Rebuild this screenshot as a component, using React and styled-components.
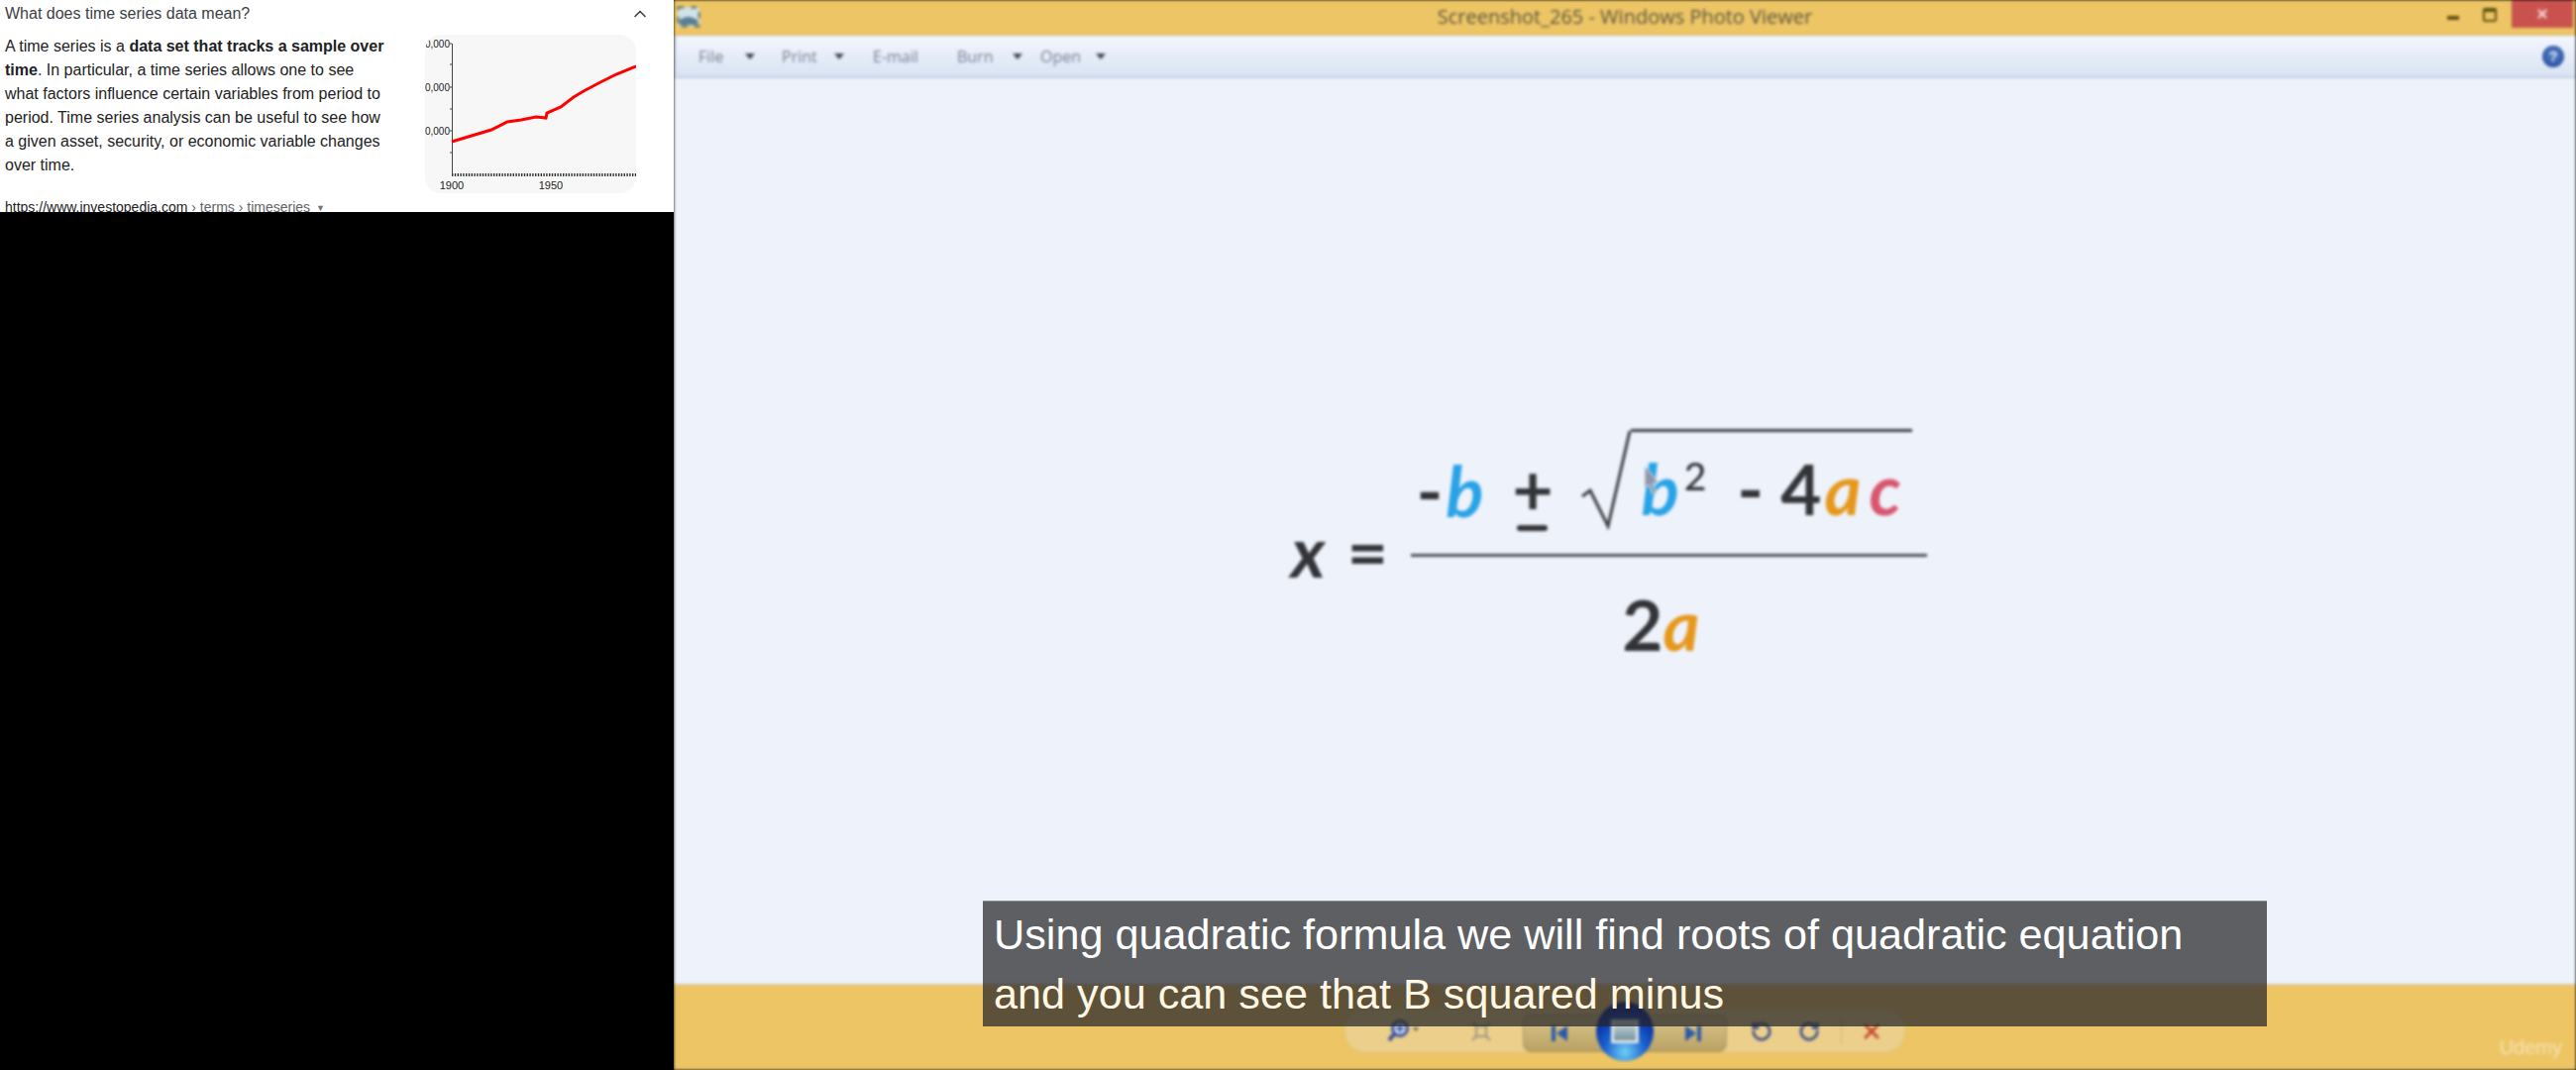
import React from 'react';
import styled, { createGlobalStyle } from 'styled-components';
import { ChevronUp, RotateCcw, RotateCw, X } from 'lucide-react';

const Global = createGlobalStyle`
  html, body { margin: 0; background: #000; }
  body { font-family: "Liberation Sans", Arial, sans-serif; }
`;

const Shell = styled.div`
  display: grid;
  grid-template-columns: 680px 1920px;
  width: 2600px;
  height: 1080px;
  overflow: hidden;
  background: #000;
`;

/* left: cropped search result */
const Snippet = styled.section`
  height: 214px;
  overflow: hidden;
  background: #fff;
  padding-left: 5px;
  color: #202124;
`;
const Question = styled.div`
  display: flex;
  align-items: center;
  justify-content: space-between;
  height: 27px;
  padding-right: 24px;
  font-size: 16px;
  color: #3c4043;
  svg { color: #444; }
`;
const Answer = styled.div`
  display: flex;
  justify-content: space-between;
  padding-right: 38px;
  margin-top: 8px;
`;
const AnswerText = styled.p`
  margin: 0;
  width: 388px;
  font-size: 16px;
  line-height: 24px;
  color: #222;
  b { font-weight: 700; color: #202124; }
`;
const ChartCard = styled.svg`
  display: block;
  width: 213px;
  height: 160px;
  border-radius: 16px;
  background: #f7f7f7;
`;
const Source = styled.div`
  margin-top: 4px;
  font-size: 14px;
  line-height: 20px;
  white-space: nowrap;
  color: #202124;
  span { color: #5f6368; }
  i { font-style: normal; font-size: 9px; color: #70757a; margin-left: 6px; vertical-align: 1px; }
`;

/* right: video of the photo viewer */
const Video = styled.section`
  position: relative;
  width: 1920px;
  height: 1080px;
  overflow: hidden;
`;
const Viewer = styled.div`
  display: flex;
  flex-direction: column;
  height: 1080px;
  background: #eef2fb;
  filter: blur(1.4px);
`;
const TitleBar = styled.header`
  position: relative;
  display: flex;
  align-items: center;
  justify-content: center;
  flex: 0 0 35px;
  background: #edc565;
  border-bottom: 1px solid #c9b27a;
`;
const WindowIcon = styled.svg`
  position: absolute;
  left: 2px;
  top: 5px;
`;
const WindowTitle = styled.div`
  font-family: "Open Sans", sans-serif;
  font-size: 20px;
  color: #5b5440;
  padding-bottom: 2px;
`;
const Controls = styled.div`
  position: absolute;
  right: 3px;
  top: 0;
  display: flex;
  align-items: flex-start;
`;
const Minimize = styled.div`
  width: 12px;
  height: 4px;
  margin: 16px 24px 0 0;
  background: #5f4c12;
`;
const Restore = styled.div`
  width: 10px;
  height: 8px;
  margin: 8px 15px 0 0;
  border: 2px solid #5f4c12;
  border-top-width: 4px;
  border-radius: 2px;
`;
const Close = styled.div`
  display: flex;
  align-items: center;
  justify-content: center;
  width: 62px;
  height: 28px;
  background: #c9524f;
  color: #fbd9d5;
`;
const MenuBar = styled.nav`
  display: flex;
  align-items: center;
  flex: 0 0 41px;
  padding-left: 22px;
  background: linear-gradient(#f4f6fd, #d8e3f2);
  border-bottom: 2px solid #c3cde0;
  border-left: 3px solid #d5dbe8;
`;
const MenuItem = styled.div`
  display: flex;
  align-items: center;
  width: ${p => p.$w}px;
  font-family: "Open Sans", sans-serif;
  font-size: 16px;
  color: #767f95;
`;
const Caret = styled.span`
  width: 0;
  height: 0;
  margin-left: ${p => p.$gap}px;
  border-left: 5px solid transparent;
  border-right: 5px solid transparent;
  border-top: 6px solid #3f4659;
`;
const HelpDot = styled.div`
  margin-left: auto;
  margin-right: 12px;
  width: 22px;
  height: 22px;
  border-radius: 50%;
  background: radial-gradient(circle at 50% 40%, #5a83c9, #1c3f91);
  color: #d7e3f6;
  font-size: 15px;
  font-weight: 700;
  line-height: 22px;
  text-align: center;
`;
const Canvas = styled.main`
  flex: 1;
  padding: 354px 0 0 623px;
`;
const Formula = styled.div`
  display: flex;
  align-items: center;
  color: #333438;
  font-family: Lato, sans-serif;
  font-weight: 700;
  font-size: 71px;
  line-height: 1;
`;
const Lhs = styled.span`
  font-style: italic;
  margin-right: 22px;
  padding-top: 12px;
`;
const Equals = styled.span`
  margin-right: 23px;
  padding-top: 12px;
`;
const Fraction = styled.div`
  display: flex;
  flex-direction: column;
  width: 521px;
`;
const Numerator = styled.div`
  display: flex;
  align-items: flex-start;
  height: 126px;
  border-bottom: 3px solid #4b4d52;
`;
const Term = styled.div`
  display: flex;
  align-items: baseline;
  padding-top: 26px;
  margin-left: ${p => p.$left || 0}px;
  letter-spacing: 3px;
`;
const Var = styled.span`
  font-style: italic;
  color: ${p => p.$c};
  margin-left: ${p => p.$left || 0}px;
`;
const Sup = styled.sup`
  font-size: 39px;
  font-weight: 500;
  line-height: 0;
  margin: 0 31px 0 5px;
  position: relative;
  top: -25px;
  vertical-align: 26px;
`;
const PlusMinus = styled.div`
  position: relative;
  width: 38px;
  margin: 0 0 0 26px;
  padding-top: 24px;
  text-align: center;
`;
const UnderBar = styled.div`
  position: absolute;
  left: 4px;
  top: 97px;
  width: 31px;
  height: 6px;
  border-radius: 3px;
  background: #333438;
`;
const RootSign = styled.svg`
  flex: none;
  margin-left: 31px;
`;
const Radicand = styled.div`
  position: relative;
  display: flex;
  align-items: baseline;
  align-self: flex-start;
  width: 284px;
  height: 100px;
  padding: 21px 0 0 11px;
  box-sizing: border-box;
  border-top: 3px solid #3a3b40;
`;
const Pointer = styled.svg`
  position: absolute;
  left: 13px;
  top: 33px;
`;
const Denominator = styled.div`
  display: flex;
  justify-content: center;
  padding: 32px 16px 0 0;
`;
const BottomBar = styled.footer`
  position: relative;
  display: flex;
  justify-content: center;
  flex: 0 0 87px;
  padding-top: 23px;
  box-sizing: border-box;
  background: #edc565;
  border-top: 2px solid #dcc795;
`;
const Pill = styled.div`
  display: flex;
  align-items: center;
  width: 568px;
  height: 45px;
  box-sizing: border-box;
  border: 1px solid #e0bf72;
  border-radius: 23px;
  background: #eccf8b;
`;
const Slot = styled.div`
  display: flex;
  align-items: center;
  justify-content: center;
  flex: 0 0 ${p => p.$w}px;
  color: ${p => p.$c || '#3c4f88'};
`;
const Segment = styled.div`
  position: relative;
  display: flex;
  align-items: center;
  justify-content: space-between;
  flex: 0 0 206px;
  height: 38px;
  margin-top: 5px;
  padding: 0 23px 0 26px;
  box-sizing: border-box;
  border: 1px solid #b09a60;
  border-radius: 8px;
  background: linear-gradient(#dcc58c, #b9a163);
`;
const Orb = styled.div`
  position: absolute;
  left: 50%;
  top: -14px;
  display: flex;
  align-items: center;
  justify-content: center;
  width: 58px;
  height: 60px;
  margin-left: -29px;
  border-radius: 50%;
  background: radial-gradient(circle at 50% 85%, #6fd0f5 0, #1a62cf 35%, #06269a 70%, #08206e 100%);
`;
const OrbScreen = styled.div`
  width: 22px;
  height: 18px;
  border: 3px solid #e3e6ea;
  background: linear-gradient(#c9d5dc, #74929a);
`;
const Separator = styled.div`
  width: 1px;
  height: 26px;
  background: #d3b571;
`;
const Watermark = styled.div`
  position: absolute;
  right: 14px;
  bottom: 11px;
  font-size: 20px;
  color: #f5e3b6;
`;

/* burned-in subtitle over the video */
const Caption = styled.div`
  position: absolute;
  left: 312px;
  top: 909px;
  width: 1296px;
  height: 127px;
  box-sizing: border-box;
  padding: 3px 0 0 11px;
  background: rgba(38, 38, 40, 0.72);
  border-top: 1px solid #8b8d93;
  font-size: 43.2px;
  line-height: 60px;
  white-space: nowrap;
`;
const CaptionLine = styled.div`
  color: ${p => p.$c};
`;

const linePoints = '27,108 47,102 67,96 83,88 97,86 112,83 122,84 123,79 137,73 150,63 160,57 177,48 193,40 213,32';

const Chart = () => (
  <ChartCard viewBox="0 0 213 160">
    <g fontFamily="Liberation Sans, Arial, sans-serif" fontSize="10" fill="#222">
      <text x="25" y="13" textAnchor="end">60,000</text>
      <text x="25" y="57" textAnchor="end">40,000</text>
      <text x="25" y="101" textAnchor="end">20,000</text>
      <text x="27" y="156" textAnchor="middle" fontSize="11">1900</text>
      <text x="127" y="156" textAnchor="middle" fontSize="11">1950</text>
    </g>
    <path d="M27.5 9V142M25 9h2M25 30h2M25 53h2M25 75h2M25 97h2M25 119h2" stroke="#444" fill="none" />
    <path d="M27 141.5H213" stroke="#333" strokeWidth="3" strokeDasharray="1.4 1.4" fill="none" />
    <polyline points={linePoints} fill="none" stroke="#f00" strokeWidth="3" />
  </ChartCard>
);

const Magnifier = () => (
  <svg width="34" height="28" viewBox="0 0 34 28">
    <circle cx="14" cy="11" r="7.5" fill="#cfe0f5" stroke="#3c4f9a" strokeWidth="3" />
    <path d="M10 11h8M14 7v8" stroke="#3c4f9a" strokeWidth="2" />
    <path d="M8 17l-5 6" stroke="#3c4f9a" strokeWidth="4" />
    <path d="M27 10h6l-3 4z" fill="#56606f" />
  </svg>
);

const ActualSize = () => (
  <svg width="24" height="24" viewBox="0 0 24 24" fill="none" stroke="#9a9682" strokeWidth="2">
    <rect x="7" y="7" width="10" height="10" />
    <path d="M3 3l4 4M21 3l-4 4M3 21l4-4M21 21l-4-4" />
  </svg>
);

const SkipPrev = () => (
  <svg width="20" height="20" viewBox="0 0 20 20" fill="#2a5aa8">
    <rect x="2" y="2" width="4" height="16" />
    <path d="M18 2v16L7 10z" />
  </svg>
);

const SkipNext = () => (
  <svg width="20" height="20" viewBox="0 0 20 20" fill="#2a5aa8">
    <rect x="14" y="2" width="4" height="16" />
    <path d="M2 2v16l11-8z" />
  </svg>
);

export default function App() {
  return (
    <>
      <Global />
      <Shell>
        <Snippet>
          <Question>
            What does time series data mean?
            <ChevronUp size={20} />
          </Question>
          <Answer>
            <AnswerText>
              A time series is a <b>data set that tracks a sample over time</b>. In particular, a time series allows one to see what factors influence certain variables from period to period. Time series analysis can be useful to see how a given asset, security, or economic variable changes over time.
            </AnswerText>
            <Chart />
          </Answer>
          <Source>
            https://www.investopedia.com <span>› terms › timeseries</span><i>▼</i>
          </Source>
        </Snippet>

        <Video>
          <Viewer>
            <TitleBar>
              <WindowIcon width="26" height="24" viewBox="0 0 22 20">
                <rect x="2" y="2" width="18" height="16" fill="#cfe3ee" stroke="#6f7b66" strokeWidth="2" strokeDasharray="5 6" />
                <path d="M3 13c5-4 10-4 16 0v4H3z" fill="#5a7f92" />
              </WindowIcon>
              <WindowTitle>Screenshot_265 - Windows Photo Viewer</WindowTitle>
              <Controls>
                <Minimize />
                <Restore />
                <Close><X size={14} strokeWidth={4} /></Close>
              </Controls>
            </TitleBar>
            <MenuBar>
              <MenuItem $w={84}>File<Caret $gap={22} /></MenuItem>
              <MenuItem $w={92}>Print<Caret $gap={17} /></MenuItem>
              <MenuItem $w={85}>E-mail</MenuItem>
              <MenuItem $w={84}>Burn<Caret $gap={19} /></MenuItem>
              <MenuItem $w={80}>Open<Caret $gap={15} /></MenuItem>
              <HelpDot>?</HelpDot>
            </MenuBar>
            <Canvas>
              <Formula>
                <Lhs>x</Lhs>
                <Equals>=</Equals>
                <Fraction>
                  <Numerator>
                    <Term $left={6}>-<Var $c="#29a3e6">b</Var></Term>
                    <PlusMinus>+<UnderBar /></PlusMinus>
                    <RootSign width="50" height="104" viewBox="0 0 50 104">
                      <path d="M1 68l8-6 18 36L49 2" fill="none" stroke="#3a3b40" strokeWidth="3" />
                    </RootSign>
                    <Radicand>
                      <Var $c="#29a3e6">b</Var>
                      <Sup>2</Sup>
                      -&nbsp;4<Var $c="#e6981c" $left={3}>a</Var><Var $c="#d9566e" $left={8}>c</Var>
                      <Pointer width="16" height="30" viewBox="0 0 16 30">
                        <path d="M1 1l14 17-6 1 4 10-4 1-4-10-4 4z" fill="#8d97a8" stroke="#e9edf6" />
                      </Pointer>
                    </Radicand>
                  </Numerator>
                  <Denominator>
                    2<Var $c="#e6981c">a</Var>
                  </Denominator>
                </Fraction>
              </Formula>
            </Canvas>
            <BottomBar>
              <Pill>
                <Slot $w={118}><Magnifier /></Slot>
                <Slot $w={40}><ActualSize /></Slot>
                <Slot $w={22} />
                <Segment>
                  <SkipPrev />
                  <Orb><OrbScreen /></Orb>
                  <SkipNext />
                </Segment>
                <Slot $w={69}><RotateCcw size={22} strokeWidth={3} /></Slot>
                <Slot $w={28}><RotateCw size={22} strokeWidth={3} /></Slot>
                <Slot $w={36}><Separator /></Slot>
                <Slot $w={26} $c="#c8442f"><X size={24} strokeWidth={3} /></Slot>
              </Pill>
              <Watermark>Udemy</Watermark>
            </BottomBar>
          </Viewer>
          <Caption>
            <CaptionLine $c="#ffffff">Using quadratic formula we will find roots of quadratic equation</CaptionLine>
            <CaptionLine $c="#fff6e4">and you can see that B squared minus</CaptionLine>
          </Caption>
        </Video>
      </Shell>
    </>
  );
}
